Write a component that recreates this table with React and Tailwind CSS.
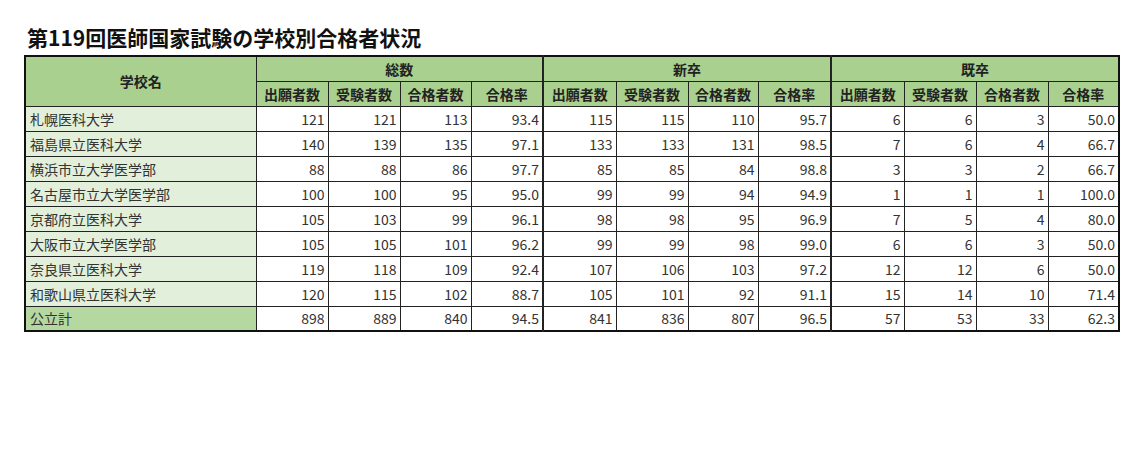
import React from 'react'

const widths = [231, 72, 72, 71, 72, 73, 72, 70, 73, 73, 72, 72, 71]

const rows = [
  ['札幌医科大学', 121, 121, 113, '93.4', 115, 115, 110, '95.7', 6, 6, 3, '50.0'],
  ['福島県立医科大学', 140, 139, 135, '97.1', 133, 133, 131, '98.5', 7, 6, 4, '66.7'],
  ['横浜市立大学医学部', 88, 88, 86, '97.7', 85, 85, 84, '98.8', 3, 3, 2, '66.7'],
  ['名古屋市立大学医学部', 100, 100, 95, '95.0', 99, 99, 94, '94.9', 1, 1, 1, '100.0'],
  ['京都府立医科大学', 105, 103, 99, '96.1', 98, 98, 95, '96.9', 7, 5, 4, '80.0'],
  ['大阪市立大学医学部', 105, 105, 101, '96.2', 99, 99, 98, '99.0', 6, 6, 3, '50.0'],
  ['奈良県立医科大学', 119, 118, 109, '92.4', 107, 106, 103, '97.2', 12, 12, 6, '50.0'],
  ['和歌山県立医科大学', 120, 115, 102, '88.7', 105, 101, 92, '91.1', 15, 14, 10, '71.4'],
]
const total = ['公立計', 898, 889, 840, '94.5', 841, 836, 807, '96.5', 57, 53, 33, '62.3']

const subHeads = ['出願者数', '受験者数', '合格者数', '合格率']
const groups = ['総数', '新卒', '既卒']

// thicker line where a group starts
const groupEdge = (i) => (i === 5 || i === 9 ? 'border-l-2' : '')

function Row({ data, last }) {
  return (
    <tr className="h-[25px]">
      <td
        className={`border border-[#222] pl-[4px] text-left ${
          last ? 'bg-[#b5d7a0]' : 'bg-[#e2efda]'
        }`}
      >
        {data[0]}
      </td>
      {data.slice(1).map((v, i) => (
        <td key={i} className={`border border-[#222] pr-[3px] text-right ${groupEdge(i + 1)}`}>
          {v}
        </td>
      ))}
    </tr>
  )
}

export default function App() {
  return (
    <div
      className="w-[1148px] h-[462px] bg-white pl-[24px] pt-[24px] text-[#333]"
      style={{ fontFamily: '"Noto Sans CJK JP", "Noto Sans", sans-serif' }}
    >
      <h1 className="ml-[3px] h-[31px] text-[21px] font-bold leading-[26px] text-[#111]">
        第119回医師国家試験の学校別合格者状況
      </h1>
      <table className="table-fixed border-collapse border-2 border-[#111] text-[14px] leading-none">
        <colgroup>
          {widths.map((w, i) => (
            <col key={i} style={{ width: w }} />
          ))}
        </colgroup>
        <thead className="font-bold text-[14px] text-[#222]">
          <tr className="h-[25px] bg-[#a9d08e]">
            <th rowSpan={2} className="border border-[#222] font-bold">
              学校名
            </th>
            {groups.map((g, i) => (
              <th key={g} colSpan={4} className={`border border-[#222] font-bold ${i > 0 ? 'border-l-2' : ''}`}>
                {g}
              </th>
            ))}
          </tr>
          <tr className="h-[25px] bg-[#a9d08e]">
            {groups.map((g, gi) =>
              subHeads.map((s, si) => (
                <th
                  key={g + s}
                  className={`border border-[#222] font-bold ${gi > 0 && si === 0 ? 'border-l-2' : ''}`}
                >
                  {s}
                </th>
              ))
            )}
          </tr>
        </thead>
        <tbody>
          {rows.map((r) => (
            <Row key={r[0]} data={r} />
          ))}
          <Row data={total} last />
        </tbody>
      </table>
    </div>
  )
}
